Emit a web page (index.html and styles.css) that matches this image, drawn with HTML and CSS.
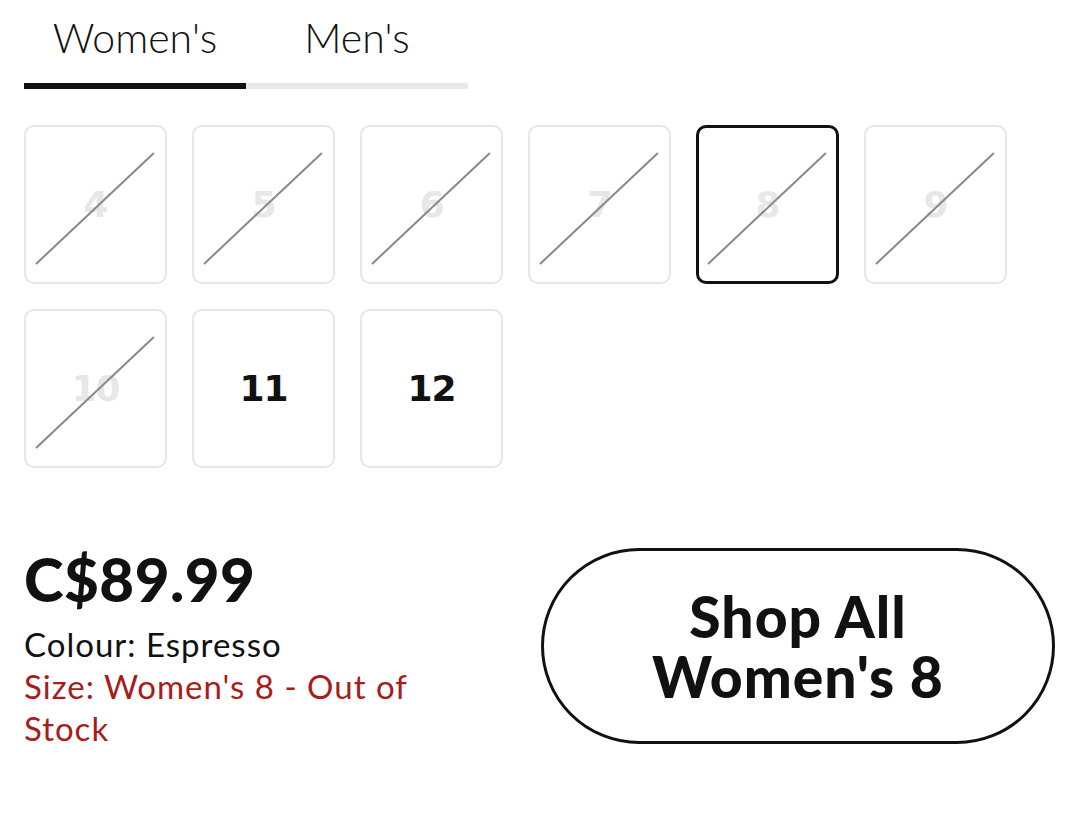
FILE: index.html
```html
<!DOCTYPE html>
<html lang="en">
<head>
    <meta charset="UTF-8">
    <meta name="viewport" content="width=device-width, initial-scale=1.0">
    <title>Size Picker</title>
    <link rel="stylesheet" href="styles.css">
</head>
<body>
    <div class="page">
        <div class="tabs">
            <div class="tab active">Women's</div>
            <div class="tab">Men's</div>
        </div>

        <div class="sizes">
            <div class="size gone">4</div>
            <div class="size gone">5</div>
            <div class="size gone">6</div>
            <div class="size gone">7</div>
            <div class="size gone picked">8</div>
            <div class="size gone">9</div>
            <div class="size gone">10</div>
            <div class="size">11</div>
            <div class="size">12</div>
        </div>

        <div class="buy">
            <div class="info">
                <div class="price">C$89.99</div>
                <p class="colour">Colour: Espresso</p>
                <p class="stock">Size: Women's 8 - Out of Stock</p>
            </div>
            <button class="shop">Shop All<br>Women's 8</button>
        </div>
    </div>
</body>
</html>
```

FILE: styles.css
```css
body {
    margin: 0;
    background-color: #fff;
    font-family: Lato, "Open Sans", sans-serif;
    color: #111;
}
.page {
    padding: 10px 24px 0;
}

/* tabs */
.tabs {
    display: flex;
    width: 444px;
}
.tab {
    flex: 1;
    text-align: center;
    font-size: 41px;
    font-weight: 300;
    line-height: 56px;
    padding-bottom: 17px;
    border-bottom: 6px solid #e8e8ea;
}
.tab.active {
    border-bottom-color: #111;
}

/* size grid */
.sizes {
    display: grid;
    grid-template-columns: repeat(6, 143px);
    grid-auto-rows: 159px;
    gap: 25px;
    margin-top: 36px;
}
.size {
    position: relative;
    display: flex;
    align-items: center;
    justify-content: center;
    border: 2px solid #e6e7e8;
    border-radius: 10px;
    font-family: "DejaVu Sans", sans-serif;
    font-weight: bold;
    font-size: 36px;
    letter-spacing: -1px;
}
.size.gone {
    color: #e6e7e8;
}
.size.gone::after {
    content: "";
    position: absolute;
    left: 10px;
    top: 24px;
    width: 162px;
    height: 2px;
    background-color: #888;
    transform-origin: left center;
    transform: translateY(112px) rotate(-43.3deg);
}
.size.picked {
    border: 3px solid #111;
}
.size.picked::after {
    left: 9px;
    top: 23px;
}

/* price + button */
.buy {
    display: flex;
    justify-content: space-between;
    align-items: flex-start;
    margin-top: 80px;
}
.price {
    font-size: 60px;
    font-weight: 900;
    line-height: 60px;
    letter-spacing: 0.5px;
    margin-top: 1px;
}
.info p {
    margin: 0;
    font-size: 33px;
    line-height: 42px;
    letter-spacing: 1px;
}
.colour {
    margin-top: 14px !important;
}
.stock {
    color: #a81c1c;
    width: 420px;
}
.shop {
    width: 514px;
    height: 196px;
    margin-right: 1px;
    padding: 0;
    background-color: #fff;
    border: 3px solid #111;
    border-radius: 100px;
    font-family: Lato, sans-serif;
    font-weight: 900;
    font-size: 57px;
    line-height: 60px;
    letter-spacing: 1px;
    color: #111;
}
```
